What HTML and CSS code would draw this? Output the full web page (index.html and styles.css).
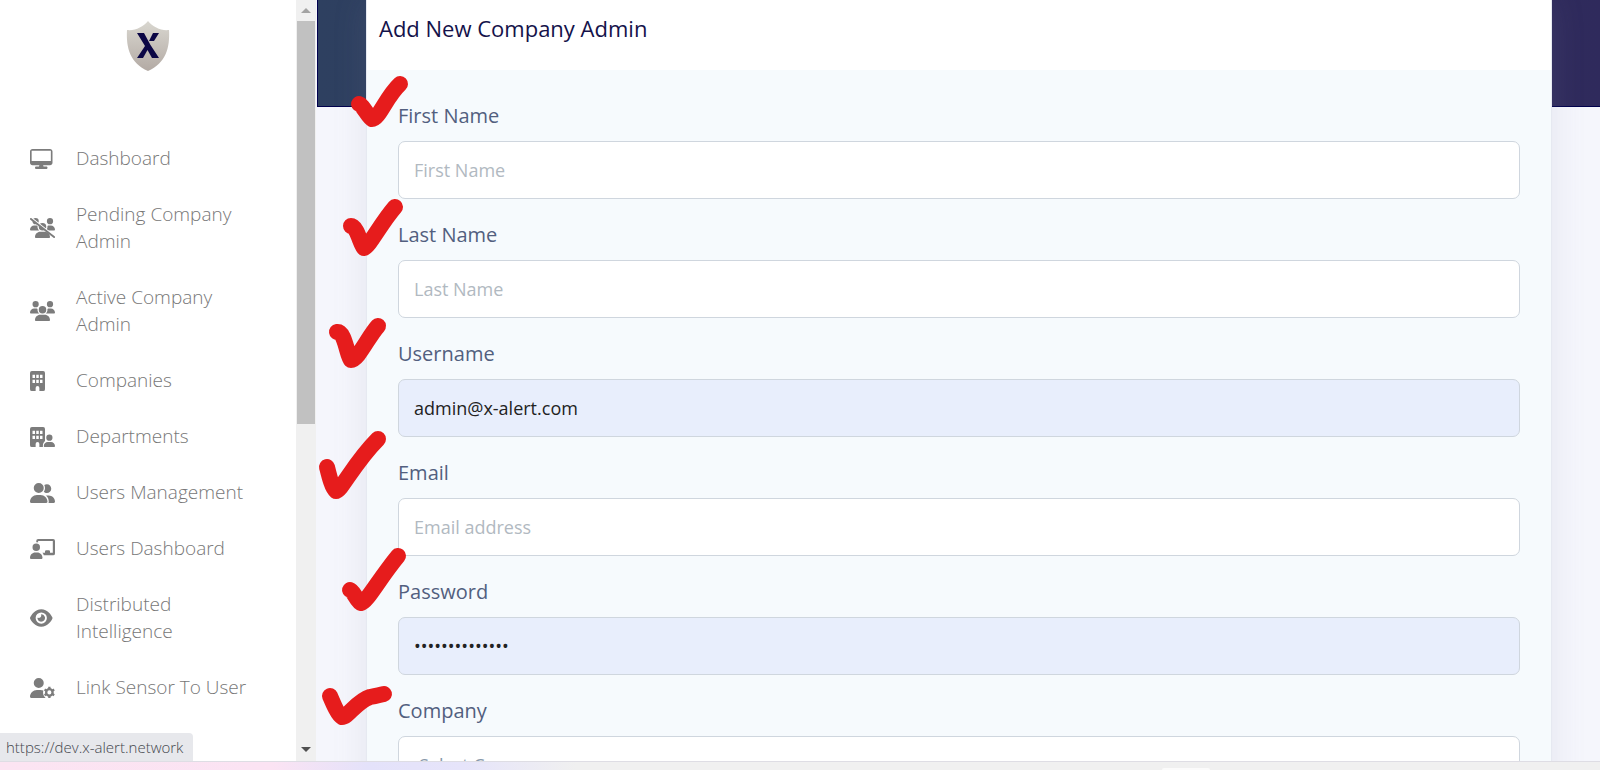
FILE: index.html
```html
<!DOCTYPE html>
<html lang="en">
<head>
    <meta charset="UTF-8">
    <meta name="viewport" content="width=device-width, initial-scale=1.0">
    <title>Add New Company Admin</title>
    <link rel="stylesheet" href="styles.css">
</head>
<body>

<div class="screen">
    <aside class="sidebar">
        <a class="logo" href="#" aria-label="X-Alert">
            <svg width="44" height="52" viewBox="0 0 44 52">
                <defs>
                    <linearGradient id="shield" x1="0" y1="0" x2="0" y2="1">
                        <stop offset="0" stop-color="#d9d7d0"/>
                        <stop offset="1" stop-color="#b3aaa4"/>
                    </linearGradient>
                </defs>
                <path fill="url(#shield)" d="M22 1C17 7 9 11 1 10C0 28 4 43 22 51C40 43 44 28 43 10C35 11 27 7 22 1z"/>
                <path fill="#0b0645" d="M11 13h7l6.500 12 8.500 13h-7l-4.500-8-4.500 8h-6l8-12zM27 13h6l-5 8h-5z"/>
            </svg>
        </a>
        <nav class="menu">
            <a href="#">
                <svg viewBox="0 0 640 512"><path d="M64 0C28.700 0 0 28.700 0 64V352c0 35.300 28.700 64 64 64H240l-10.700 32H160c-17.700 0-32 14.300-32 32s14.300 32 32 32H416c17.700 0 32-14.300 32-32s-14.300-32-32-32H346.700L336 416H512c35.300 0 64-28.700 64-64V64c0-35.300-28.700-64-64-64H64zM534 44V304H42V44H534z"/></svg>
                <span>Dashboard</span>
            </a>
            <a href="#">
                <svg viewBox="0 0 640 512">
                    <path d="M144 0a80 80 0 1 1 0 160A80 80 0 1 1 144 0zM512 0a80 80 0 1 1 0 160A80 80 0 1 1 512 0zM0 298.700C0 239.800 47.800 192 106.700 192h42.700c15.900 0 31 3.500 44.600 9.700c-1.300 7.200-1.900 14.700-1.900 22.300c0 38.200 16.800 72.500 43.300 96H21.300C9.600 320 0 310.400 0 298.700zM405.300 320c26.600-23.500 42.600-57.800 42.600-96c0-7.600-.7-15-1.900-22.300c13.600-6.300 28.700-9.700 44.600-9.700h42.700C592.200 192 640 239.800 640 298.700c0 11.800-9.600 21.300-21.300 21.300H405.300zM224 224a96 96 0 1 1 192 0 96 96 0 1 1 -192 0zM128 485.300C128 411.700 187.700 352 261.300 352H378.700C452.300 352 512 411.700 512 485.300c0 14.700-11.900 26.700-26.700 26.700H154.700c-14.700 0-26.700-11.900-26.700-26.700z"/>
                    <path class="gap" d="M0 -24L640 478"/>
                    <path class="slash" d="M24 24L616 488"/>
                </svg>
                <span>Pending Company Admin</span>
            </a>
            <a href="#">
                <svg viewBox="0 0 640 512"><path d="M144 0a80 80 0 1 1 0 160A80 80 0 1 1 144 0zM512 0a80 80 0 1 1 0 160A80 80 0 1 1 512 0zM0 298.700C0 239.800 47.800 192 106.700 192h42.700c15.900 0 31 3.500 44.600 9.700c-1.300 7.200-1.900 14.700-1.900 22.300c0 38.200 16.800 72.500 43.300 96H21.300C9.600 320 0 310.400 0 298.700zM405.300 320c26.600-23.500 42.600-57.800 42.600-96c0-7.600-.7-15-1.900-22.300c13.600-6.300 28.700-9.700 44.600-9.700h42.700C592.200 192 640 239.800 640 298.700c0 11.800-9.600 21.300-21.300 21.300H405.300zM224 224a96 96 0 1 1 192 0 96 96 0 1 1 -192 0zM128 485.300C128 411.700 187.700 352 261.300 352H378.700C452.300 352 512 411.700 512 485.300c0 14.700-11.900 26.700-26.700 26.700H154.700c-14.700 0-26.700-11.900-26.700-26.700z"/></svg>
                <span>Active Company Admin</span>
            </a>
            <a href="#">
                <svg viewBox="0 0 640 512"><path fill-rule="evenodd" d="M48 0H336a48 48 0 0 1 48 48V464a48 48 0 0 1-48 48H240V432a48 48 0 0 0-96 0v80H48a48 48 0 0 1-48-48V48A48 48 0 0 1 48 0zM64 96v80h64V96zM160 96v80h64V96zM256 96v80h64V96zM64 224v80h64V224zM160 224v80h64V224zM256 224v80h64V224z"/></svg>
                <span>Companies</span>
            </a>
            <a href="#">
                <svg viewBox="0 0 640 512">
                    <path fill-rule="evenodd" d="M48 0H336a48 48 0 0 1 48 48V360C350 390 330 430 330 480V512H240V432a48 48 0 0 0-96 0v80H48a48 48 0 0 1-48-48V48A48 48 0 0 1 48 0zM64 96v80h64V96zM160 96v80h64V96zM256 96v80h64V96zM64 224v80h64V224zM160 224v80h64V224zM256 224v80h64V224z"/>
                    <path d="M496 192a80 80 0 1 1 0 160 80 80 0 1 1 0-160zM352 486C352 430 398 384 454 384h84c56 0 102 46 102 102 0 14-12 26-26 26H378c-14 0-26-12-26-26z"/>
                </svg>
                <span>Departments</span>
            </a>
            <a href="#">
                <svg viewBox="0 0 640 512"><path d="M96 128a128 128 0 1 1 256 0A128 128 0 1 1 96 128zM0 482.300C0 383.800 79.800 304 178.300 304h91.400C368.200 304 448 383.800 448 482.300c0 16.400-13.300 29.700-29.700 29.700H29.700C13.300 512 0 498.700 0 482.300zM609.300 512H471.400c5.400-9.400 8.600-20.300 8.600-32v-8c0-60.700-27.100-115.200-69.800-151.800c2.400-.1 4.700-.2 7.100-.2h61.400C567.800 320 640 392.200 640 481.300c0 17-13.800 30.700-30.700 30.700zM432 256c-31 0-59-12.600-79.300-32.900C372.400 196.500 384 163.600 384 128c0-26.800-6.600-52.100-18.300-74.300C384.300 40.100 407.200 32 432 32c61.900 0 112 50.100 112 112s-50.100 112-112 112z"/></svg>
                <span>Users Management</span>
            </a>
            <a href="#">
                <svg viewBox="0 0 640 512"><path d="M160 112a96 96 0 1 1 0 192 96 96 0 1 1 0-192zM0 480c0-74 60-134 134-134h52c74 0 134 60 134 134 0 18-14 32-32 32H32c-18 0-32-14-32-32zM160 80V48a48 48 0 0 1 48-48H592a48 48 0 0 1 48 48V368a48 48 0 0 1-48 48H352c-6-26-18-48-36-64h68v-32a32 32 0 0 1 32-32h64a32 32 0 0 1 32 32v32h72V48H208v41c-14-6-30-9-48-9z"/></svg>
                <span>Users Dashboard</span>
            </a>
            <a href="#">
                <svg viewBox="0 0 640 512"><path d="M288 32c-80.800 0-145.500 36.800-192.600 80.600C48.600 156 17.300 208 2.500 243.700c-3.300 7.900-3.300 16.700 0 24.600C17.300 304 48.600 356 95.400 399.400C142.500 443.200 207.200 480 288 480s145.500-36.800 192.600-80.600c46.800-43.500 78.100-95.400 93-131.100c3.300-7.900 3.300-16.700 0-24.600c-14.900-35.700-46.200-87.700-93-131.100C433.500 68.800 368.800 32 288 32zM144 256a144 144 0 1 1 288 0 144 144 0 1 1 -288 0zm144-64c0 35.300-28.700 64-64 64c-7.100 0-13.900-1.200-20.300-3.300c-5.500-1.800-11.900 1.600-11.700 7.400c.3 6.900 1.300 13.800 3.200 20.700c13.700 51.200 66.400 81.600 117.600 67.900s81.600-66.400 67.900-117.600c-11.100-41.500-47.800-69.400-88.600-71.100c-5.800-.2-9.200 6.100-7.400 11.700c2.100 6.400 3.300 13.200 3.300 20.300z"/></svg>
                <span>Distributed Intelligence</span>
            </a>
            <a href="#">
                <svg viewBox="0 0 640 512">
                    <path d="M96 128a128 128 0 1 1 256 0A128 128 0 1 1 96 128zM0 482C0 384 80 304 178 304h92c26 0 50 5 72 15-20 60-2 142 56 193H30C13 512 0 499 0 482z"/>
                    <circle class="ring" cx="496" cy="368" r="82"/>
                    <path class="teeth" d="M496 292V226M496 444V510M562 330L619 297M430 406L373 439M430 330L373 297M562 406L619 439"/>
                </svg>
                <span>Link Sensor To User</span>
            </a>
        </nav>
        <div class="status">https://dev.x-alert.network</div>
    </aside>

    <div class="scrollbar" aria-hidden="true">
        <i class="arrow up"></i>
        <i class="thumb"></i>
        <i class="arrow down"></i>
    </div>

    <main class="content">
        <div class="banner"></div>
        <section class="card">
            <h1>Add New Company Admin</h1>
            <form>
                <div class="field">
                    <label for="first">First Name</label>
                    <input type="text" id="first" placeholder="First Name">
                </div>
                <div class="field">
                    <label for="last">Last Name</label>
                    <input type="text" id="last" placeholder="Last Name">
                </div>
                <div class="field">
                    <label for="username">Username</label>
                    <input class="filled" type="text" id="username" value="admin@x-alert.com">
                </div>
                <div class="field">
                    <label for="email">Email</label>
                    <input type="email" id="email" placeholder="Email address">
                </div>
                <div class="field">
                    <label for="password">Password</label>
                    <input class="filled" type="password" id="password" value="xalertadmin123">
                </div>
                <div class="field">
                    <label for="company">Company</label>
                    <select id="company">
                        <option>Select Company</option>
                    </select>
                </div>
            </form>
        </section>
        <!-- hand-drawn ticks beside the fields -->
        <svg class="ticks" width="100" height="761" viewBox="316 0 100 761">
            <path d="M359 104C363 105 368 117 372 119C379 119 386 97 400 84"/>
            <path d="M351 226C357 226 361 246 364 248C369 247 381 223 395 207"/>
            <path d="M337 332C345 331 347 356 351 360C358 360 368 337 378 326"/>
            <path d="M327 467C329 475 332 488 336 491C341 491 354 463 378 439"/>
            <path d="M350 590C354 591 357 602 361 603C367 602 379 579 398 556"/>
            <path d="M330 696C333 703 338 715 342 717C348 717 357 701 370 697C375 696 380 695 384 694"/>
        </svg>
    </main>
</div>
<footer class="taskbar"><span></span></footer>

</body>
</html>
```

FILE: styles.css
```css
* {
    box-sizing: border-box;
}

body {
    display: grid;
    grid-template-rows: 1fr 9px;
    height: 100vh;
    margin: 0;
    overflow: hidden;
    background-color: #fff;
    font-family: "Open Sans", "Noto Sans", sans-serif;
}

.screen {
    display: grid;
    grid-template-columns: 296px 20px 1fr;
    min-height: 0;
    overflow: hidden;
}

/* Sidebar */
.sidebar {
    position: relative;
    overflow: hidden;
}

.logo {
    display: flex;
    justify-content: center;
    padding: 20px 0 59px;
}

.menu a {
    display: flex;
    align-items: center;
    gap: 21px;
    min-height: 56px;
    padding: 14px 40px 15px 30px;
    color: #777;
    font-size: 19px;
    font-weight: 300;
    line-height: 27px;
    text-decoration: none;
}

.menu svg {
    flex: none;
    width: 25px;
    height: 20px;
    fill: #7c7c7c;
}

.menu .gap,
.menu .slash,
.menu .ring,
.menu .teeth {
    fill: none;
    stroke: #7c7c7c;
    stroke-width: 48;
    stroke-linecap: round;
}

.menu .gap {
    stroke: #fff;
}

.menu .ring {
    stroke-width: 60;
}

.menu .teeth {
    stroke-width: 60;
    stroke-linecap: butt;
}

.status {
    position: absolute;
    left: 0;
    bottom: 0;
    padding: 0 10px 0 6px;
    border-radius: 0 4px 0 0;
    background-color: #e7e8ec;
    color: #44474c;
    font-size: 15px;
    font-weight: 300;
    line-height: 28px;
}

.scrollbar {
    display: flex;
    flex-direction: column;
    align-items: center;
    background-color: #f0f0f0;
}

.thumb {
    width: 18px;
    height: 53%;
    margin-bottom: auto;
    background-color: #c1c1c1;
}

.arrow {
    border: 5px solid transparent;
}

.up {
    margin-bottom: 8px;
    padding-top: 3px;
    border-bottom-color: #a3a3a3;
}

.down {
    margin-bottom: 4px;
    border-top-color: #505050;
}

/* Page */
.content {
    position: relative;
    overflow: hidden;
    background-color: #f5f6fc;
}

.banner {
    height: 107px;
    margin-left: 1px;
    border: 1px solid #00004d;
    border-width: 0 0 1px 1px;
    background: linear-gradient(90deg, #2e4060, #2f2a5c);
}

.card {
    position: relative;
    margin: -107px 48px 0 50px;
    border: 1px solid #e6e9f1;
    border-width: 0 1px;
    background-color: #f6fafd;
    box-shadow: 0 0 32px rgba(136, 136, 160, 0.15);
}

h1 {
    margin: 0;
    padding: 13px 12px 27px;
    background-color: #fff;
    color: #14124a;
    font-size: 22px;
    font-weight: 500;
    line-height: 30px;
}

form {
    padding: 31px;
}

.field {
    display: flex;
    flex-direction: column;
    gap: 10px;
    margin-bottom: 21px;
}

label {
    color: #525f7f;
    font-size: 20px;
    line-height: 30px;
}

input,
select {
    width: 100%;
    height: 58px;
    padding: 0 15px;
    border: 1px solid #cfd6de;
    border-radius: 7px;
    background-color: #fff;
    color: #8898aa;
    font-family: inherit;
    font-size: 18px;
}

select {
    appearance: none;
    padding: 0 20px;
}

input::placeholder {
    color: #b1b9c1;
}

.filled {
    background-color: #e8eefc;
    color: #222;
}

.ticks {
    position: absolute;
    top: 0;
    left: 0;
    fill: none;
    stroke: #e61c1c;
    stroke-width: 16;
    stroke-linecap: round;
    stroke-linejoin: round;
}

.taskbar {
    display: flex;
    justify-content: flex-end;
    padding: 6px 390px 0 0;
    border-top: 1px solid #dedde4;
    background: linear-gradient(90deg, #fce4f2 0, #fbe3f3 17%, #e4e2fa 23%, #e6e4fa 29%, #f0f0f0 36%);
}

.taskbar span {
    width: 48px;
    border-radius: 4px 4px 0 0;
    background-color: #fbfbfb;
}
```
